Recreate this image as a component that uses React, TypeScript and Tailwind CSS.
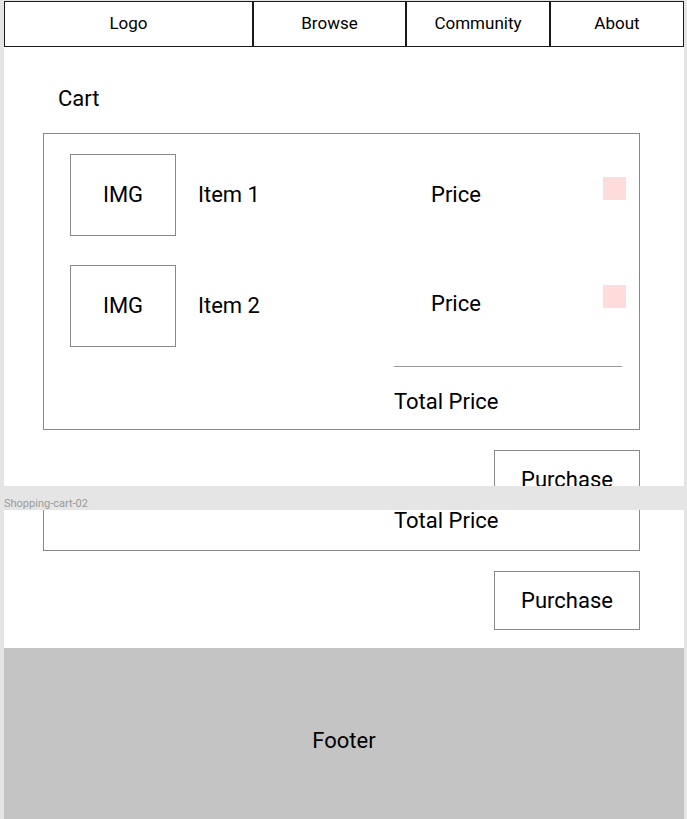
import React from "react";

const navItems = [
  { label: "Logo", w: "w-[249px]" },
  { label: "Browse", w: "w-[153px]" },
  { label: "Community", w: "w-[144px]" },
  { label: "About", w: "w-[134px]" },
];

function Nav() {
  return (
    <div className="flex h-[46px]">
      {navItems.map((n) => (
        <div key={n.label} className={`${n.w} flex items-center justify-center border border-[#1a1a1a] text-[17px] text-black`}>
          {n.label}
        </div>
      ))}
    </div>
  );
}

function CartRow({ name, first }: { name: string; first?: boolean }) {
  return (
    <div className={`flex items-center pl-[26px] pr-[13px] ${first ? "" : "mt-[29px]"}`}>
      <div className="w-[106px] h-[82px] border border-[#888] flex items-center justify-center text-[22px] leading-[26px]">IMG</div>
      <div className="ml-[22px] w-[233px] text-[22px] leading-[26px]">{name}</div>
      <div className={`text-[22px] leading-[26px] ${first ? "" : "-mt-[4px]"}`}>Price</div>
      <div className={`ml-auto w-[23px] h-[23px] bg-[#ffdcdc] self-start ${first ? "mt-[23px]" : "mt-[20px]"}`} />
    </div>
  );
}

function PurchaseButton() {
  return (
    <div className="flex justify-end mr-[44px] mt-[20px]">
      <div className="w-[146px] h-[59px] border border-[#888] flex items-center justify-center text-[22px] leading-[26px]">Purchase</div>
    </div>
  );
}

export default function App() {
  return (
    <div className="min-h-screen bg-[#e5e5e5] pt-px text-black" style={{ fontFamily: "Roboto, 'Noto Sans', sans-serif" }}>
      {/* frame 1 */}
      <div className="ml-[4px] w-[680px] h-[485px] bg-white overflow-hidden">
        <Nav />
        <div className="ml-[54px] pt-[39px] text-[22px] leading-[26px]">Cart</div>
        <div className="mt-[21px] ml-[39px] w-[597px] border border-[#888] pt-[20px] pb-[14px]">
          <CartRow name="Item 1" first />
          <CartRow name="Item 2" />
          <div className="ml-[350px] w-[228px] h-px bg-[#999] mt-[19px]" />
          <div className="ml-[350px] mt-[22px] text-[22px] leading-[26px]">Total Price</div>
        </div>
        <PurchaseButton />
      </div>

      {/* frame label */}
      <div className="h-[24px] flex items-end pl-[4px] text-[11px] leading-[13px] text-[#9a9a9a]">Shopping-cart-02</div>

      {/* frame 2, scrolled down */}
      <div className="ml-[4px] w-[680px] bg-white">
        <div className="pb-[18px]">
          <div className="ml-[39px] w-[597px] h-[41px] border-x border-b border-[#888]">
            <div className="ml-[350px] text-[22px] leading-[22px]">Total Price</div>
          </div>
          <PurchaseButton />
        </div>
        <div className="h-[184px] bg-[#c4c4c4] flex items-center justify-center text-[22px]">Footer</div>
      </div>
    </div>
  );
}
